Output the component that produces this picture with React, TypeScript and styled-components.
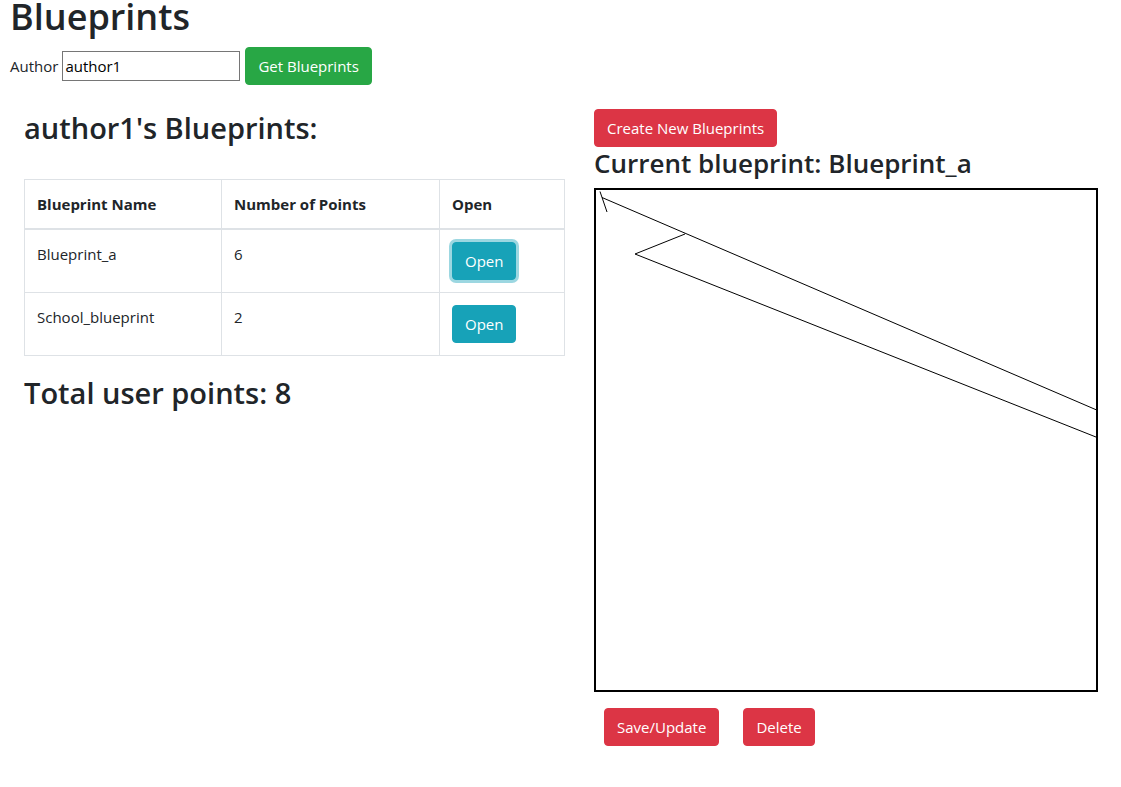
import styled, { createGlobalStyle, css } from "styled-components";

const GlobalStyle = createGlobalStyle`
  body {
    margin: 0;
    font-family: "Open Sans", "Noto Sans", sans-serif;
    font-size: 15px;
    line-height: 1.5;
    color: #212529;
    background: #fff;
  }
`;

const Page = styled.div`
  padding: 0 10px;
`;

const Title = styled.h1`
  margin: 0 0 13px;
  font-size: 36px;
  line-height: 34px;
  font-weight: 600;
`;

const AuthorRow = styled.div`
  display: flex;
  align-items: center;
  height: 38px;
`;

const Label = styled.label`
  margin-right: 4px;
`;

const AuthorInput = styled.input`
  box-sizing: border-box;
  width: 178px;
  height: 30px;
  padding: 1px 2px;
  border: 1px solid #767676;
  font: inherit;
  color: #000;
  margin-right: 5px;
`;

type Variant = "success" | "danger" | "info";

const colors: Record<Variant, string> = {
  success: "#28a745",
  danger: "#dc3545",
  info: "#17a2b8",
};

const Button = styled.button<{ $variant: Variant; $focused?: boolean }>`
  box-sizing: border-box;
  height: 38px;
  padding: 6px 12px;
  border: 1px solid ${(p) => colors[p.$variant]};
  border-radius: 4px;
  background: ${(p) => colors[p.$variant]};
  color: #fff;
  font: inherit;
  font-size: 15px;
  line-height: 24px;
  cursor: pointer;
  ${(p) =>
    p.$focused &&
    css`
      box-shadow: 0 0 0 3px rgba(58, 176, 195, 0.5);
    `}
`;

const Main = styled.div`
  display: grid;
  grid-template-columns: 540px 504px;
  column-gap: 30px;
  margin: 24px 0 0 14px;
  align-items: start;
`;

const Column = styled.div`
  display: flex;
  flex-direction: column;
  align-items: flex-start;
`;

const Heading = styled.h2<{ $size?: number }>`
  margin: 0;
  font-size: ${(p) => p.$size ?? 29}px;
  line-height: 1.2;
  font-weight: 600;
  white-space: nowrap;
`;

const ListHeading = styled(Heading)`
  margin: 2px 0 33px;
`;

const TotalHeading = styled(Heading)`
  margin-top: 20px;
`;

const CurrentHeading = styled(Heading)`
  margin: 1px 0 9px;
`;

const Table = styled.table`
  width: 540px;
  table-layout: fixed;
  border-collapse: collapse;
  line-height: 24px;
  th,
  td {
    border: 1px solid #dee2e6;
    padding: 12px;
    text-align: left;
    vertical-align: top;
  }
  thead th {
    font-weight: 700;
    border-bottom-width: 2px;
  }
`;

const Canvas = styled.div`
  width: 500px;
  height: 500px;
  border: 2px solid #000;
  svg {
    display: block;
  }
`;

const Actions = styled.div`
  display: flex;
  gap: 24px;
  margin: 16px 0 0 10px;
`;

const blueprints = [
  { name: "Blueprint_a", points: 6 },
  { name: "School_blueprint", points: 2 },
];

export default function App() {
  const total = blueprints.reduce((s, b) => s + b.points, 0);
  return (
    <Page>
      <GlobalStyle />
      <Title>Blueprints</Title>
      <AuthorRow>
        <Label>Author</Label>
        <AuthorInput defaultValue="author1" />
        <Button $variant="success">Get Blueprints</Button>
      </AuthorRow>
      <Main>
        <Column>
          <ListHeading>author1's Blueprints:</ListHeading>
          <Table>
            <colgroup>
              <col style={{ width: 197 }} />
              <col style={{ width: 218 }} />
              <col style={{ width: 125 }} />
            </colgroup>
            <thead>
              <tr>
                <th>Blueprint Name</th>
                <th>Number of Points</th>
                <th>Open</th>
              </tr>
            </thead>
            <tbody>
              {blueprints.map((b, i) => (
                <tr key={b.name}>
                  <td>{b.name}</td>
                  <td>{b.points}</td>
                  <td>
                    <Button $variant="info" $focused={i === 0}>
                      Open
                    </Button>
                  </td>
                </tr>
              ))}
            </tbody>
          </Table>
          <TotalHeading>Total user points: {total}</TotalHeading>
        </Column>
        <Column>
          <Button $variant="danger">Create New Blueprints</Button>
          <CurrentHeading $size={26}>Current blueprint: Blueprint_a</CurrentHeading>
          <Canvas>
            <svg width="500" height="500" viewBox="0 0 500 500">
              <g stroke="#000" strokeWidth="1" fill="none">
                <line x1="4" y1="1.5" x2="11" y2="22" />
                <line x1="6" y1="7.5" x2="510" y2="224" />
                <polyline points="89,44 39,64 510,251" />
              </g>
            </svg>
          </Canvas>
          <Actions>
            <Button $variant="danger">Save/Update</Button>
            <Button $variant="danger">Delete</Button>
          </Actions>
        </Column>
      </Main>
    </Page>
  );
}
